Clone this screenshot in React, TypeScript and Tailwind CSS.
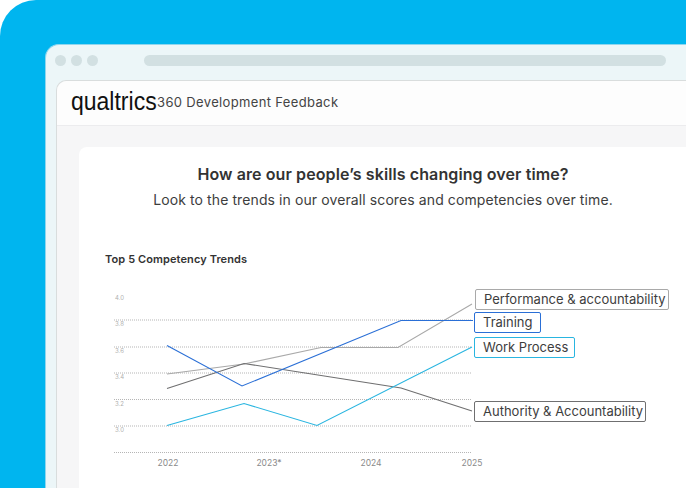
const grid = [320, 347, 373, 399.5, 426, 452.5];
const yLabels = [
  ["4.0", 298],
  ["3.8", 324],
  ["3.6", 351],
  ["3.4", 377],
  ["3.2", 404],
  ["3.0", 430],
] as const;
const xLabels = [
  ["2022", 167],
  ["2023*", 268],
  ["2024", 370],
  ["2025", 471],
] as const;
const series = [
  { color: "#a9a9a9", points: "166,374 243,364 320,347.5 397,347.5 471,304" },
  { color: "#6f6f70", points: "166,388.5 243,363.5 400,388 471,411" },
  { color: "#2a6fd6", points: "166,345.5 241,386 400,320.5 472,320.5" },
  { color: "#29b5e0", points: "166,425.5 243,403.5 316,425.5 471,347" },
];

export default function App() {
  return (
    <div className="w-[686px] h-[488px] bg-white overflow-hidden" style={{ fontFamily: "Inter, sans-serif" }}>
      <div className="w-full h-full bg-[#00b5ef] rounded-tl-[36px] pl-[45px] pt-[44px]">
        <div className="w-full h-full bg-[#ecf6f8] rounded-tl-[14px] border-t border-l border-[#8fd6ee] pl-[10px] flex flex-col">
          <div className="h-[35px] shrink-0 flex items-start pt-[10px] pl-0 -ml-[1px]">
            <div className="flex gap-[5px]">
              <div className="w-[11px] h-[11px] rounded-full bg-[#d2e0e2]" />
              <div className="w-[11px] h-[11px] rounded-full bg-[#d2e0e2]" />
              <div className="w-[11px] h-[11px] rounded-full bg-[#d2e0e2]" />
            </div>
            <div className="ml-[46px] w-[522px] h-[11px] rounded-full bg-[#d2e0e2]" />
          </div>
          <div className="flex-1 bg-[#f6f6f7] rounded-tl-[10px] border-t border-l border-[#d9dddd] flex flex-col">
            <div className="h-[45px] shrink-0 bg-[#fdfdfd] rounded-tl-[10px] border-b border-[#ececee] flex items-center pl-[14px]">
              <span
                className="text-[25px] leading-none text-[#111] w-[65px] origin-left scale-x-[0.92] -mt-[3px] whitespace-nowrap"
                style={{ fontFamily: "'Liberation Sans Narrow', 'Liberation Sans', sans-serif" }}
              >
                qualtrics
              </span>
              <span className="ml-[21px] text-[13px] tracking-[0.35px] text-[#444] whitespace-nowrap">
                360 Development Feedback
              </span>
            </div>
            <div className="flex-1 pl-[22px] pt-[21px]">
              <div className="w-full h-full bg-white rounded-tl-[8px] relative">
                <div className="absolute left-0 w-[608px] top-[15px] flex flex-col items-center">
                  <h1 className="text-[16px] leading-[24px] font-semibold text-[#333] tracking-[0.1px] whitespace-nowrap">
                    How are our people’s skills changing over time?
                  </h1>
                  <p className="text-[14px] leading-[24px] mt-[2px] text-[#3d3d3d] tracking-[0.1px] whitespace-nowrap">
                    Look to the trends in our overall scores and competencies over time.
                  </p>
                </div>
                <h2 className="absolute left-[26px] top-[105px] text-[11px] leading-[14px] font-semibold text-[#333] tracking-[0.1px] whitespace-nowrap">
                  Top 5 Competency Trends
                </h2>
                <svg className="absolute left-[-78px] top-[-147px]" width="686" height="488" viewBox="0 0 686 488">
                  {grid.map((y) => (
                    <line key={y} x1="113" x2="471" y1={y} y2={y} stroke="#b5b5b5" strokeWidth="1" strokeDasharray="1 1" />
                  ))}
                  {yLabels.map(([t, y]) => (
                    <text key={t} x="114" y={y + 2} fontSize="6" fill="#b0b0b0" fontFamily="Inter, sans-serif">{t}</text>
                  ))}
                  {xLabels.map(([t, x]) => (
                    <text key={t} x={x} y="466" fontSize="8.5" textAnchor="middle" fill="#8a8a8a" fontFamily="Inter, sans-serif">{t}</text>
                  ))}
                  {series.map((s) => (
                    <polyline key={s.color} points={s.points} fill="none" stroke={s.color} strokeWidth="1.1" />
                  ))}
                </svg>
                <Tag className="left-[396px] top-[142px] w-[194px] border-[#a9a9a9]">Performance &amp; accountability</Tag>
                <Tag className="left-[395px] top-[165px] w-[67px] border-[#2a6fd6]">Training</Tag>
                <Tag className="left-[395px] top-[190px] w-[101px] border-[#29b5e0]">Work Process</Tag>
                <Tag className="left-[395px] top-[254px] w-[172px] border-[#6f6f70]">Authority &amp; Accountability</Tag>
              </div>
            </div>
          </div>
        </div>
      </div>
    </div>
  );
}

function Tag({ className, children }: { className: string; children: React.ReactNode }) {
  return (
    <div
      className={
        "absolute h-[21px] bg-white border-[1.5px] rounded-[2px] pl-[8px] flex items-center text-[13px] leading-none text-[#3d3d3d] whitespace-nowrap " +
        className
      }
    >
      {children}
    </div>
  );
}
